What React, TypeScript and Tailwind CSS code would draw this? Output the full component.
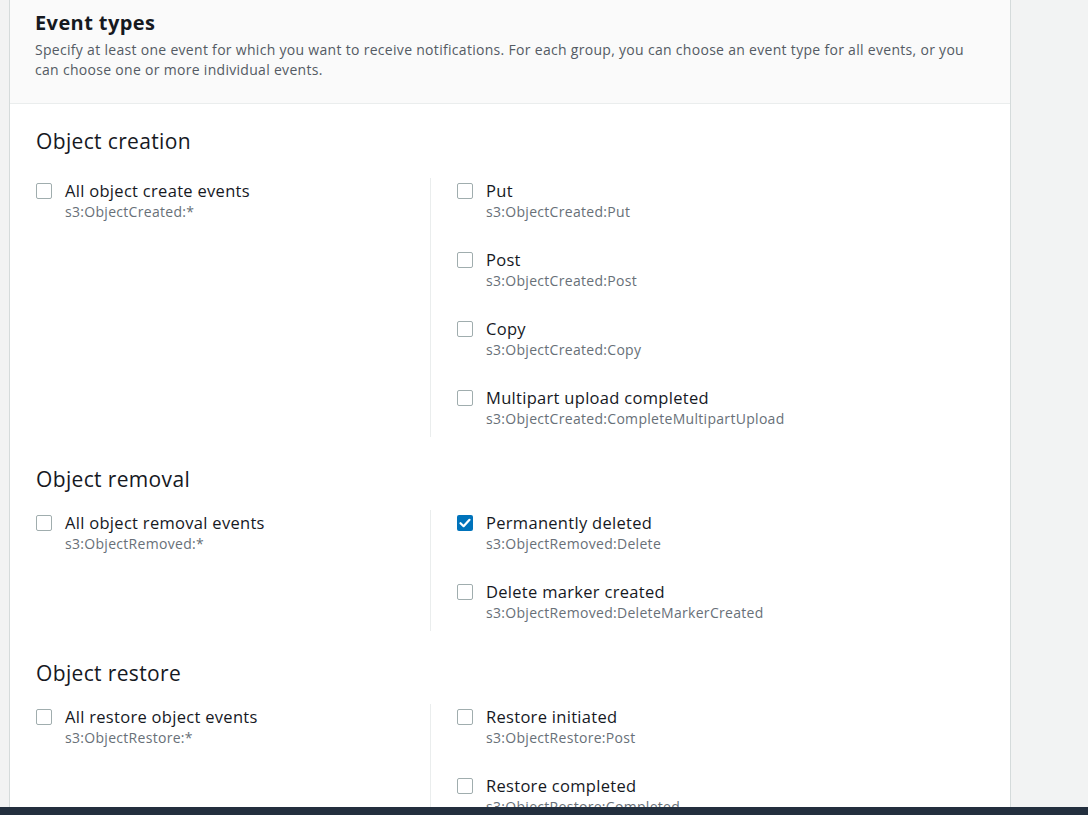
import React from 'react';

interface EventOption {
  label: string;
  code: string;
  checked?: boolean;
}

interface Group {
  title: string;
  all: EventOption;
  items: EventOption[];
  gap: string;
}

const groups: Group[] = [
  {
    title: 'Object creation',
    gap: 'mt-[25px]',
    all: { label: 'All object create events', code: 's3:ObjectCreated:*' },
    items: [
      { label: 'Put', code: 's3:ObjectCreated:Put' },
      { label: 'Post', code: 's3:ObjectCreated:Post' },
      { label: 'Copy', code: 's3:ObjectCreated:Copy' },
      { label: 'Multipart upload completed', code: 's3:ObjectCreated:CompleteMultipartUpload' },
    ],
  },
  {
    title: 'Object removal',
    gap: 'mt-[19px]',
    all: { label: 'All object removal events', code: 's3:ObjectRemoved:*' },
    items: [
      { label: 'Permanently deleted', code: 's3:ObjectRemoved:Delete', checked: true },
      { label: 'Delete marker created', code: 's3:ObjectRemoved:DeleteMarkerCreated' },
    ],
  },
  {
    title: 'Object restore',
    gap: 'mt-[19px]',
    all: { label: 'All restore object events', code: 's3:ObjectRestore:*' },
    items: [
      { label: 'Restore initiated', code: 's3:ObjectRestore:Post' },
      { label: 'Restore completed', code: 's3:ObjectRestore:Completed' },
    ],
  },
];

const Checkbox = ({ checked }: { checked?: boolean }) =>
  checked ? (
    <span className="mt-[3px] flex h-4 w-4 shrink-0 items-center justify-center rounded-[2px] bg-[#0073bb]">
      <svg viewBox="0 0 16 16" className="h-4 w-4" fill="none">
        <path d="M3.5 8.2 6.6 11.2 12.5 4.8" stroke="white" strokeWidth="2.2" strokeLinecap="round" strokeLinejoin="round" />
      </svg>
    </span>
  ) : (
    <span className="mt-[3px] h-4 w-4 shrink-0 rounded-[2px] border border-[#a0adae] bg-white" />
  );

const Option = ({ option }: { option: EventOption }) => (
  <div className="flex gap-[13px]">
    <Checkbox checked={option.checked} />
    <div>
      <p className="text-[16.5px] leading-[22px] tracking-[0.3px] text-[#16191f]">{option.label}</p>
      <p className="text-[14px] leading-[20px] tracking-[0.3px] text-[#687078]">{option.code}</p>
    </div>
  </div>
);

export default function App() {
  return (
    <div
      className="relative h-[815px] overflow-hidden bg-[#f2f3f3]"
      style={{ fontFamily: '"Open Sans", "Noto Sans", sans-serif' }}
    >
      <div className="ml-[9px] h-full w-[1002px] border-x border-[#d5dbdb] bg-white">
        <div className="border-b border-[#eaeded] bg-[#fafafa] px-[25px] pb-[23px] pt-[12px]">
          <h2 className="text-[20px] font-bold leading-[22px] tracking-[0.4px] text-[#16191f]">Event types</h2>
          <p className="mt-[6px] max-w-[935px] text-[14px] leading-[20px] tracking-[0.3px] text-[#545b64]">
            Specify at least one event for which you want to receive notifications. For each group, you can
            choose an event type for all events, or you can choose one or more individual events.
          </p>
        </div>

        <div className="px-[26px] pt-[25px]">
          {groups.map((group, i) => (
            <section key={group.title} className={i > 0 ? 'mt-[30px]' : ''}>
              <h3 className="text-[21px] leading-[24px] tracking-[0.35px] text-[#16191f]">{group.title}</h3>
              <div className={`flex ${group.gap}`}>
                <div className="w-[394px] shrink-0 pt-[2px]">
                  <Option option={group.all} />
                </div>
                <div className="flex flex-1 flex-col gap-[27px] border-l border-[#eaeded] pb-[8px] pl-[26px] pt-[2px]">
                  {group.items.map((item) => (
                    <Option key={item.code} option={item} />
                  ))}
                </div>
              </div>
            </section>
          ))}
        </div>
      </div>
      <div className="absolute bottom-0 left-0 h-[8px] w-full bg-[#232f3e]" />
    </div>
  );
}
